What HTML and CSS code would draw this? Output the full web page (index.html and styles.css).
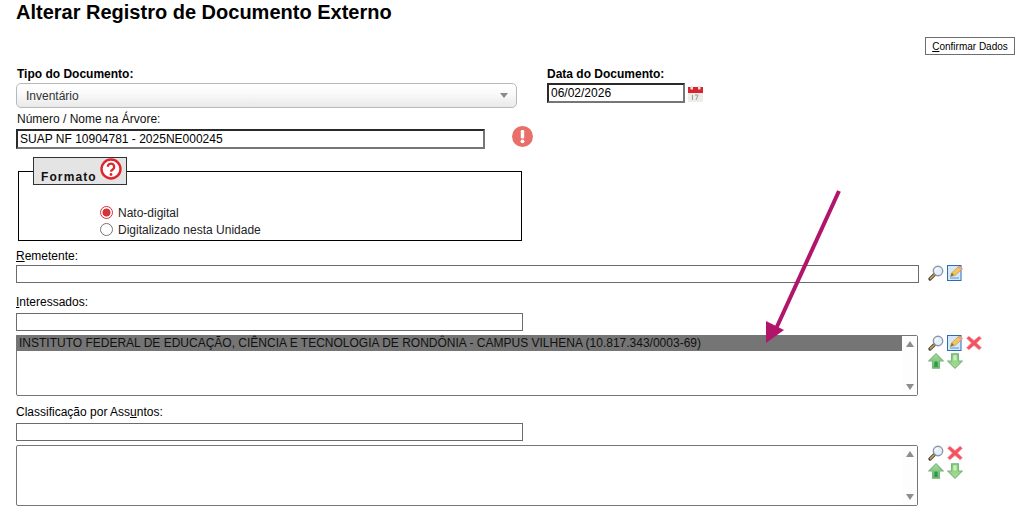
FILE: index.html
```html
<!DOCTYPE html>
<html lang="pt-BR">
<head>
<meta charset="utf-8">
<title>Alterar Registro de Documento Externo</title>
<link rel="stylesheet" href="styles.css">
</head>
<body>
<svg class="sprites" width="0" height="0" aria-hidden="true">
  <defs>
    <linearGradient id="gUp" x1="0" y1="0" x2="0" y2="1"><stop offset="0" stop-color="#a5e09d"/><stop offset="1" stop-color="#5fb763"/></linearGradient>
    <linearGradient id="gDown" x1="0" y1="0" x2="0" y2="1"><stop offset="0" stop-color="#7cc874"/><stop offset="1" stop-color="#a9e291"/></linearGradient>
    <symbol id="lupa" viewBox="0 0 16 16">
      <path d="M6.500 9.500 2 14" stroke="#3c4254" stroke-width="3.200" stroke-linecap="round"/>
      <path d="M6 10 2.400 13.600" stroke="#e3a02f" stroke-width="1.500" stroke-linecap="round"/>
      <circle cx="10" cy="6" r="4.700" fill="#e6eefa" stroke="#8b97a8" stroke-width="1.400"/>
      <path d="M7.500 6a2.600 2.600 0 0 1 2.600-2.600" fill="none" stroke="#fff" stroke-width="1.200"/>
    </symbol>
    <symbol id="edit" viewBox="0 0 16 16">
      <rect x="0.500" y="0.500" width="13.500" height="15" fill="#d5e7f9" stroke="#2a6db5"/>
      <path d="M3 13h9" stroke="#4f9ad8" stroke-width="1"/>
      <path d="M3.500 11.500 4.800 7.800 12 1 15.500 3.800 8 10.500z" fill="#f1c564" stroke="#c2953a" stroke-width=".7"/>
      <path d="M3.500 11.500 4.800 7.800 7 10z" fill="#8a6a30"/>
      <path d="M12 1 15.500 3.800 14 5.200 10.600 2.400z" fill="#e9a090"/>
    </symbol>
    <symbol id="del" viewBox="0 0 14 14">
      <path d="M2.500 1 7 4.800 11.500 1 13.500 2.800 9.300 7 13.500 11.200 11.500 13 7 9.200 2.500 13 .5 11.200 4.700 7 .5 2.800z" fill="#f4525e" stroke="#f79aa0" stroke-width=".6"/>
    </symbol>
    <symbol id="up" viewBox="0 0 15 15">
      <path d="M7.500 .7 14.300 7.500H10.800V14.300H4.200V7.500H.7z" fill="url(#gUp)" stroke="#7fb382"/>
      <path d="M6 8h3v5H6z" fill="#2e9a49"/>
    </symbol>
    <symbol id="down" viewBox="0 0 15 15">
      <path d="M4.200 .7H10.800V7.500H14.300L7.500 14.300 .7 7.500H4.200z" fill="url(#gDown)" stroke="#7fb382"/>
      <path d="M6 2h3v5H6z" fill="#c9f0bd"/>
    </symbol>
  </defs>
</svg>

<main class="page">
  <h1 class="title">Alterar Registro de Documento Externo</h1>

  <div class="actions">
    <button class="btn" type="button"><u>C</u>onfirmar Dados</button>
  </div>

  <div class="row-top">
    <div class="col-tipo">
      <label class="label-bold label-tipo">Tipo do Documento:</label>
      <div class="select">
        <span>Inventário</span>
        <span class="caret"></span>
      </div>
    </div>
    <div class="col-data">
      <label class="label-bold">Data do Documento:</label>
      <div class="date-row">
        <input class="input-inset input-date" type="text" value="06/02/2026">
        <svg class="calendar" viewBox="0 0 15 16" width="15" height="16">
          <rect x="0" y="1" width="15" height="15" fill="#efedea"/>
          <rect x="0" y="1" width="15" height="6" fill="#d8252c"/>
          <rect x="2.500" y="0" width="2.500" height="3.500" fill="#e4e4e4"/>
          <rect x="10" y="0" width="2.500" height="3.500" fill="#e4e4e4"/>
          <path d="M4.500 9v5M7 9h3l-2 5" fill="none" stroke="#9a9a9a" stroke-width="1"/>
        </svg>
      </div>
    </div>
  </div>

  <label class="label label-numero">Número / Nome na Árvore:</label>
  <div class="numero-row">
    <input class="input-inset input-numero" type="text" value="SUAP NF 10904781 - 2025NE000245">
    <svg class="alert" viewBox="0 0 21 21" width="21" height="21">
      <circle cx="10.500" cy="10.500" r="10.500" fill="#e9706a"/>
      <rect x="8.800" y="4" width="3.400" height="8.500" rx="1.200" fill="#fff"/>
      <circle cx="10.500" cy="15.300" r="1.900" fill="#fff"/>
    </svg>
  </div>

  <fieldset class="formato">
    <legend class="legend">
      <span>Formato</span>
      <svg class="help" viewBox="0 0 22 22" width="22" height="22">
        <circle cx="11" cy="11" r="9.500" fill="#fff" stroke="#e0252c" stroke-width="2.400"/>
        <path d="M7.800 8.800a3.200 3.100 0 1 1 4.900 2.600c-1.100.7-1.700 1.200-1.700 2.400" fill="none" stroke="#e0252c" stroke-width="2.300"/>
        <circle cx="11" cy="16.500" r="1.400" fill="#e0252c"/>
      </svg>
    </legend>
    <div class="radios">
      <label class="radio-line"><span class="radio radio-on"></span>Nato-digital</label>
      <label class="radio-line"><span class="radio"></span>Digitalizado nesta Unidade</label>
    </div>
  </fieldset>

  <label class="label label-remetente"><u>R</u>emetente:</label>
  <div class="field-row">
    <input class="input-plain input-full" type="text">
    <div class="tools">
      <svg class="ico" width="16" height="16"><use href="#lupa"/></svg>
      <svg class="ico" width="16" height="16"><use href="#edit"/></svg>
    </div>
  </div>

  <label class="label label-interessados"><u>I</u>nteressados:</label>
  <input class="input-plain input-half" type="text">
  <div class="field-row list-row">
    <div class="list">
      <div class="list-body"><div class="list-item">INSTITUTO FEDERAL DE EDUCAÇÃO, CIÊNCIA E TECNOLOGIA DE RONDÔNIA - CAMPUS VILHENA (10.817.343/0003-69)</div></div>
      <div class="scroll"><span class="sc-up"></span><span class="sc-down"></span></div>
    </div>
    <div class="tools-grid">
      <svg class="ico" width="16" height="16"><use href="#lupa"/></svg>
      <svg class="ico" width="16" height="16"><use href="#edit"/></svg>
      <svg class="ico" width="16" height="16"><use href="#del"/></svg>
      <svg class="ico" width="16" height="16"><use href="#up"/></svg>
      <svg class="ico" width="16" height="16"><use href="#down"/></svg>
    </div>
  </div>

  <label class="label label-classif">Classificação por Ass<u>u</u>ntos:</label>
  <input class="input-plain input-half" type="text">
  <div class="field-row list-row">
    <div class="list">
      <div class="list-body"></div>
      <div class="scroll"><span class="sc-up"></span><span class="sc-down"></span></div>
    </div>
    <div class="tools-grid tools-two">
      <svg class="ico" width="16" height="16"><use href="#lupa"/></svg>
      <svg class="ico" width="16" height="16"><use href="#del"/></svg>
      <svg class="ico" width="16" height="16"><use href="#up"/></svg>
      <svg class="ico" width="16" height="16"><use href="#down"/></svg>
    </div>
  </div>

  <svg class="arrow" viewBox="0 0 90 160" width="90" height="160">
    <path d="M76 2 12 142" stroke="#b2146b" stroke-width="4" fill="none"/>
    <path d="M3 132 21 141 3 154z" fill="#b2146b"/>
  </svg>
</main>
</body>
</html>
```
FILE: styles.css
```css
* { box-sizing: border-box; }
html, body { margin: 0; padding: 0; background: #fff; height: 512px; overflow: hidden; }
body { font-family: "Liberation Sans", Arial, sans-serif; font-size: 12px; color: #000; }
.sprites { position: absolute; }
.page { position: relative; padding: 0 0 0 16px; height: 512px; }

.title { margin: 0; padding: 1px 0 0 0; font-size: 20px; line-height: 23px; font-weight: bold; height: 37px; }

.actions { display: flex; justify-content: flex-end; padding-right: 8px; height: 28px; }
.btn { width: 90px; height: 18px; padding: 0; background: #fff; border: 1px solid #6e6e6e; font: 10px "Liberation Sans", Arial, sans-serif; color: #000; }

.row-top { display: flex; height: 43px; }
.col-tipo { width: 531px; }
.col-data { width: 300px; }
.label-bold { display: block; font-weight: bold; font-size: 12px; line-height: 18px; height: 18px; }
.label-tipo { padding-left: 1px; }
.label { display: block; font-size: 12px; line-height: 14px; }

.select { width: 501px; height: 25px; border: 1px solid #b9b9b9; border-radius: 5px; background: linear-gradient(#fff, #fafafa 40%, #e9e9e9); display: flex; align-items: center; justify-content: space-between; padding: 0 9px; color: #333; }
.caret { width: 0; height: 0; border-left: 4px solid transparent; border-right: 4px solid transparent; border-top: 5px solid #8a8a8a; margin-right: -1px; }

.date-row { display: flex; align-items: flex-start; gap: 3px; }
.input-inset { height: 20px; border: 2px solid; border-color: #2a2a2a #767676 #767676 #2a2a2a; padding: 0 1px 0 2px; font: 12px "Liberation Sans", Arial, sans-serif; color: #000; background: #fff; outline: 0; }
.input-date { width: 138px; }
.calendar { margin-top: 3px; }

.label-numero { margin-top: 4px; margin-bottom: 1px; padding-left: 1px; height: 16px; color: #111; }
.numero-row { display: flex; align-items: flex-start; }
.input-numero { width: 469px; }
.alert { margin-left: 27px; margin-top: -3px; }

.formato { position: relative; margin: 22px 0 0 2px; width: 504px; height: 70px; padding: 0; border: 1px solid #000; }
.legend { position: absolute; left: 14px; top: -15px; width: 94px; height: 28px; padding: 0 0 0 7px; background: #e4e4e4; border: 1px solid #333; font-weight: bold; font-size: 12px; letter-spacing: 1.1px; display: flex; }
.legend span { margin-top: 12px; line-height: 14px; color: #111; }
.help { position: absolute; left: 66px; top: 0; }
.radios { position: absolute; left: 81px; top: 32px; }
.radio-line { display: flex; align-items: center; gap: 5px; height: 17px; color: #222; }
.radio { width: 13px; height: 13px; border-radius: 50%; border: 1px solid #767676; background: #fff; flex: none; }
.radio-on { border-color: #d5343b; background: radial-gradient(circle, #d5343b 0 3.6px, #fff 4.4px); }

.input-plain { display: block; height: 18px; border: 1px solid #6b6b6b; background: #fff; padding: 0; outline: 0; }
.input-full { width: 903px; }
.input-half { width: 507px; }

.label-remetente { margin-top: 8px; height: 16px; }
.field-row { display: flex; align-items: flex-start; }
.tools { display: flex; gap: 3px; margin-left: 9px; }
.ico { display: block; flex: none; }

.label-interessados { margin-top: 12px; height: 18px; }
.list-row { margin-top: 4px; }
.list { width: 902px; height: 61px; border: 1px solid #767676; border-radius: 2px; background: #fff; display: flex; }
.list-body { flex: 1; }
.list-item { height: 16px; line-height: 16px; margin: -1px 0 0 -1px; padding-left: 3px; background: #757575; color: #111; white-space: nowrap; }
.scroll { width: 15px; background: #fdfdfd; display: flex; flex-direction: column; justify-content: space-between; align-items: center; padding: 5px 0; }
.sc-up { width: 0; height: 0; border: 4.500px solid transparent; border-top: 0; border-bottom: 6px solid #8d8d8d; }
.sc-down { width: 0; height: 0; border: 4.500px solid transparent; border-bottom: 0; border-top: 6px solid #8d8d8d; }

.tools-grid { display: grid; grid-template-columns: repeat(3, 16px); column-gap: 3px; row-gap: 2px; margin-left: 10px; }
.tools-two { grid-template-columns: repeat(2, 16px); }
.label-classif { margin-top: 9px; height: 18px; }
.arrow { position: absolute; left: 763px; top: 189px; }
```
